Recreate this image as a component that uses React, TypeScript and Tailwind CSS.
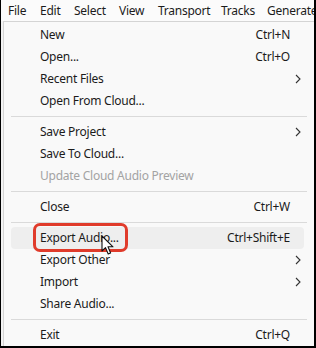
import React from 'react';

type Item =
  | { type: 'sep' }
  | { type: 'item'; label: string; shortcut?: string; submenu?: boolean; disabled?: boolean; active?: boolean };

const menuBar = [
  { label: 'File', w: 'w-[32px]' },
  { label: 'Edit', w: 'w-[34px]' },
  { label: 'Select', w: 'w-[45px]' },
  { label: 'View', w: 'w-[39px]' },
  { label: 'Transport', w: 'w-[63px]' },
  { label: 'Tracks', w: 'w-[46px]' },
  { label: 'Generate', w: 'w-[48px]' },
];

const items: Item[] = [
  { type: 'item', label: 'New', shortcut: 'Ctrl+N' },
  { type: 'item', label: 'Open...', shortcut: 'Ctrl+O' },
  { type: 'item', label: 'Recent Files', submenu: true },
  { type: 'item', label: 'Open From Cloud...' },
  { type: 'sep' },
  { type: 'item', label: 'Save Project', submenu: true },
  { type: 'item', label: 'Save To Cloud...' },
  { type: 'item', label: 'Update Cloud Audio Preview', disabled: true },
  { type: 'sep' },
  { type: 'item', label: 'Close', shortcut: 'Ctrl+W' },
  { type: 'sep' },
  { type: 'item', label: 'Export Audio...', shortcut: 'Ctrl+Shift+E', active: true },
  { type: 'item', label: 'Export Other', submenu: true },
  { type: 'item', label: 'Import', submenu: true },
  { type: 'item', label: 'Share Audio...' },
  { type: 'sep' },
  { type: 'item', label: 'Exit', shortcut: 'Ctrl+Q' },
];

function Chevron() {
  return (
    <svg width="6" height="10" viewBox="0 0 6 10" className="absolute right-[3px] top-[6px]">
      <path d="M1 1 L5 5 L1 9" fill="none" stroke="#333" strokeWidth="1.1" />
    </svg>
  );
}

function Cursor() {
  return (
    <svg width="14" height="21" viewBox="0 0 14 21" className="absolute left-[90px] top-[8px]">
      <path
        d="M1 1 L1 16 L4.5 12.6 L7.2 19 L9.6 18 L7 11.8 L12 11.8 Z"
        fill="#fff"
        stroke="#111"
        strokeWidth="1.1"
        strokeLinejoin="round"
      />
    </svg>
  );
}

export default function App() {
  return (
    <div
      className="relative w-[316px] h-[348px] overflow-hidden bg-[#f3f3f3] border-l border-r-2 border-b-2 border-black flex flex-col text-[12px] tracking-[-0.25px] text-[#1b1b1b]"
      style={{ fontFamily: '"Segoe UI", "Noto Sans", sans-serif' }}
    >
      {/* Menu bar */}
      <div className="h-[21px] shrink-0 flex items-center pl-[7px] bg-[#fbfbfb]">
        {menuBar.map((m) => (
          <span key={m.label} className={`${m.w} shrink-0 whitespace-nowrap`}>
            {m.label}
          </span>
        ))}
      </div>

      {/* Dropdown */}
      <div className="flex-1 ml-[2px] pt-[2px] bg-[#f9f9f9] border-t border-l border-[#d4d4d4]">
        {items.map((it, i) =>
          it.type === 'sep' ? (
            <div key={i} className="h-[9px] flex items-center">
              <div className="ml-[7px] w-[296px] h-px bg-[#dadada]" />
            </div>
          ) : (
            <div
              key={i}
              className={`relative ml-[7px] w-[293px] h-[22px] flex items-center justify-between pl-[29px] pr-[14px] rounded-[4px] ${
                it.active ? 'bg-[#eeeeee]' : ''
              } ${it.disabled ? 'text-[#a3a3a3]' : ''}`}
            >
              <span className="whitespace-nowrap">{it.label}</span>
              {it.shortcut && <span className="whitespace-nowrap">{it.shortcut}</span>}
              {it.submenu && <Chevron />}
              {it.active && (
                <>
                  <div className="absolute left-[22px] top-[-4px] w-[95px] h-[29px] border-[3px] border-[#e03b2b] rounded-[7px]" />
                  <Cursor />
                </>
              )}
            </div>
          )
        )}
      </div>
    </div>
  );
}
